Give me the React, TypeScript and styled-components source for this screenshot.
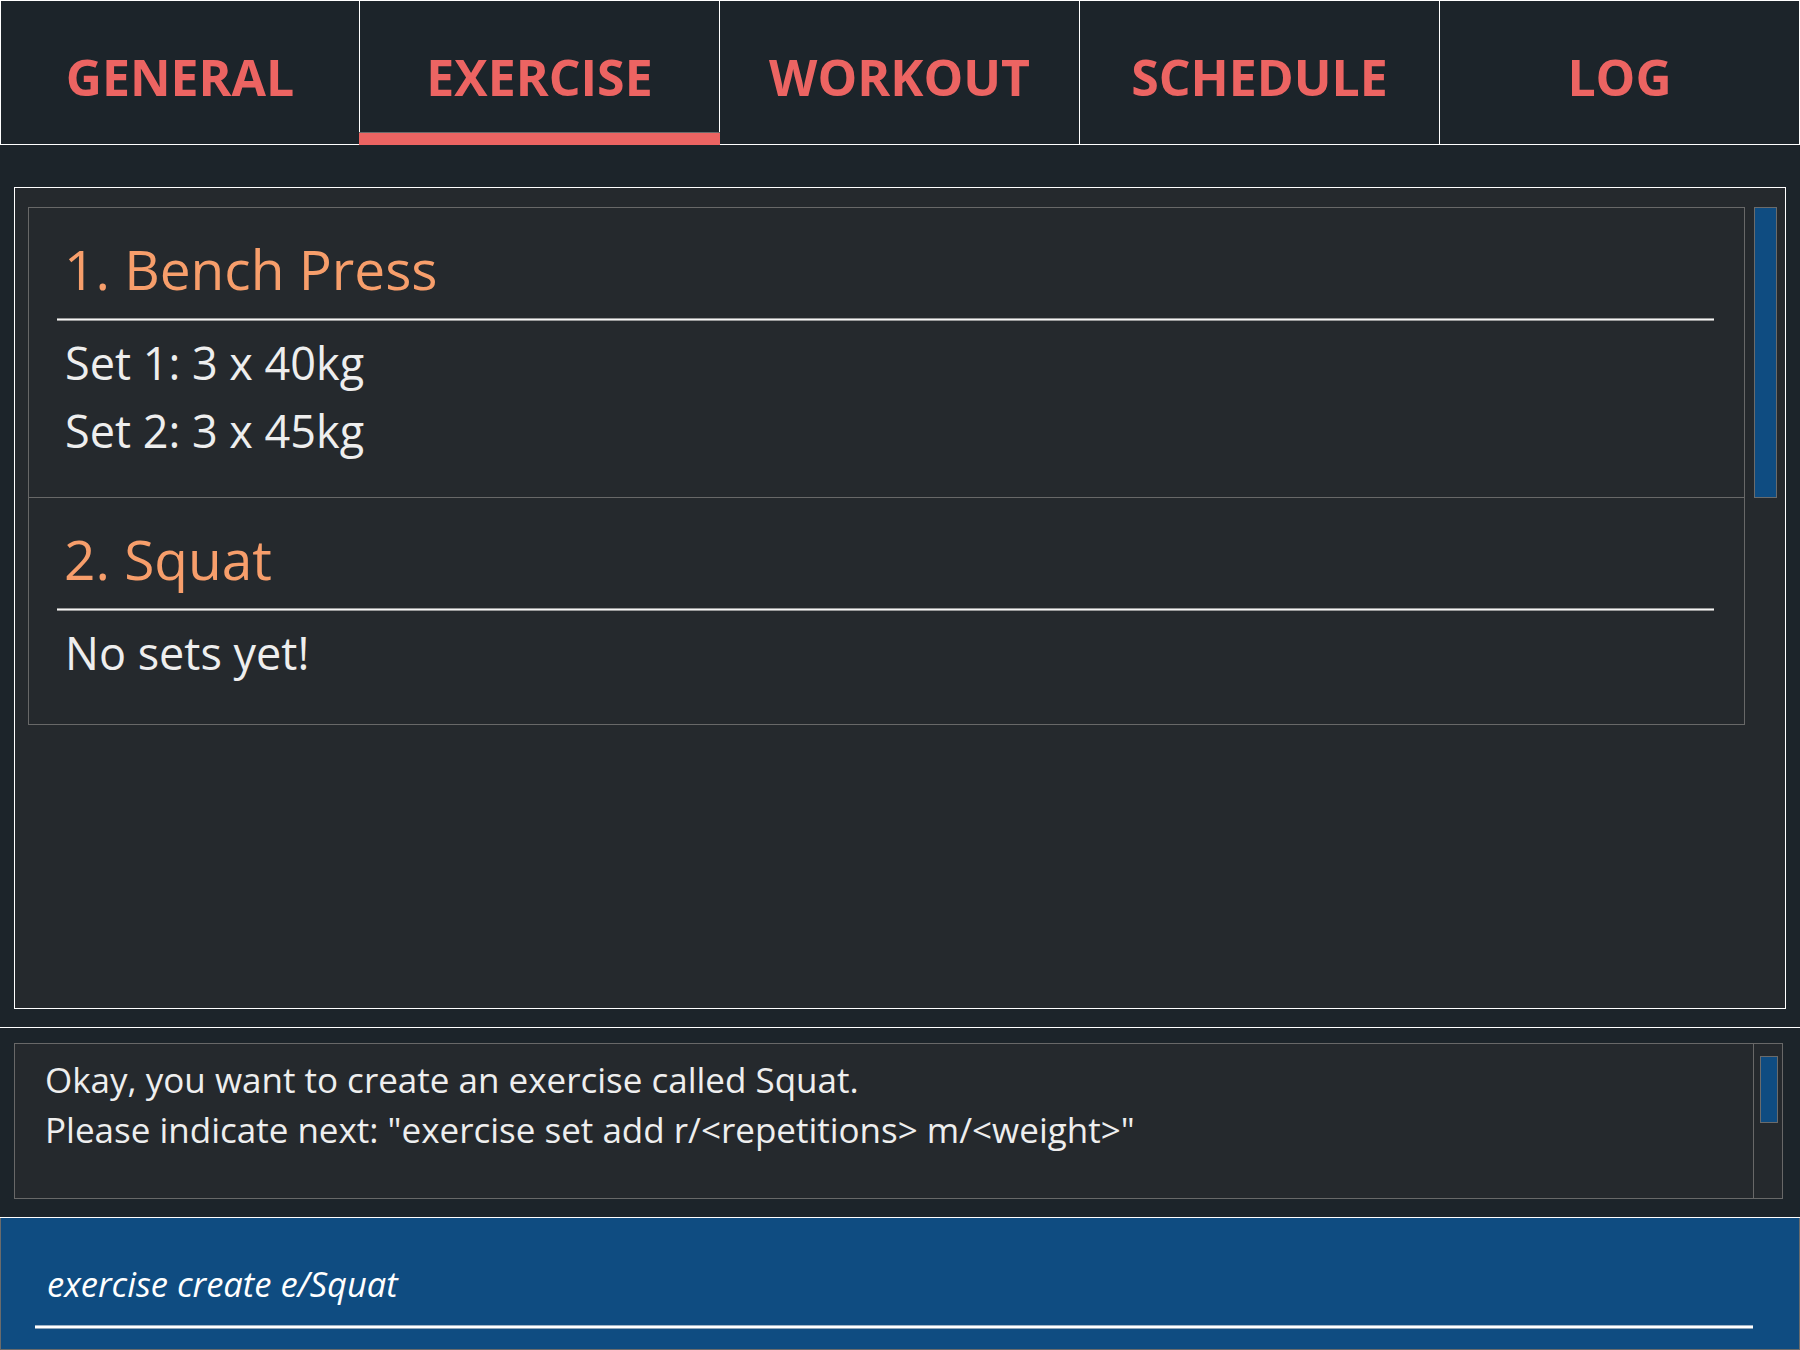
import React from 'react';
import styled, { createGlobalStyle } from 'styled-components';

interface ExerciseSet {
  reps: number;
  weight: number;
}
interface Exercise {
  name: string;
  sets: ExerciseSet[];
}

const tabs = ['General', 'Exercise', 'Workout', 'Schedule', 'Log'];
const activeTab = 'Exercise';

const exercises: Exercise[] = [
  {
    name: 'Bench Press',
    sets: [
      { reps: 3, weight: 40 },
      { reps: 3, weight: 45 },
    ],
  },
  { name: 'Squat', sets: [] },
];

const resultLines = [
  'Okay, you want to create an exercise called Squat.',
  'Please indicate next: "exercise set add r/<repetitions> m/<weight>"',
];

const GlobalStyle = createGlobalStyle`
  html, body {
    margin: 0;
    padding: 0;
    background: #1c242a;
  }
  body {
    font-family: 'Open Sans', 'Noto Sans', sans-serif;
  }
  * {
    box-sizing: border-box;
  }
`;

const App: React.FC = () => {
  return (
    <>
      <GlobalStyle />
      <Window>
        <TabBar>
          {tabs.map((t) => (
            <Tab key={t} active={t === activeTab}>
              {t}
            </Tab>
          ))}
        </TabBar>

        <ListPanel>
          <CardList>
            {exercises.map((ex, i) => (
              <Card key={ex.name}>
                <CardTitle>
                  {i + 1}. {ex.name}
                </CardTitle>
                <Separator />
                <SetList>
                  {ex.sets.length ? (
                    ex.sets.map((s, j) => (
                      <SetLine key={j}>
                        Set {j + 1}: {s.reps} x {s.weight}kg
                      </SetLine>
                    ))
                  ) : (
                    <EmptyNote>No sets yet!</EmptyNote>
                  )}
                </SetList>
              </Card>
            ))}
          </CardList>
          <ScrollTrack>
            <Thumb style={{ height: 291 }} />
          </ScrollTrack>
        </ListPanel>

        <ResultSection>
          <ResultBox>
            <ResultText>
              {resultLines.map((l) => (
                <div key={l}>{l}</div>
              ))}
            </ResultText>
            <ResultScroll>
              <SmallThumb />
            </ResultScroll>
          </ResultBox>
        </ResultSection>

        <CommandBox>
          <CommandInput readOnly defaultValue="exercise create e/Squat" />
          <CommandUnderline />
        </CommandBox>
      </Window>
    </>
  );
};
export default App;

const Window = styled.div`
  width: 1800px;
  height: 1350px;
  display: flex;
  flex-direction: column;
  background: #1c242a;
  overflow: hidden;
`;

const TabBar = styled.div`
  display: grid;
  grid-template-columns: repeat(5, 1fr);
  height: 145px;
  flex-shrink: 0;
`;

const Tab = styled.div<{ active?: boolean }>`
  position: relative;
  display: flex;
  align-items: center;
  justify-content: center;
  padding-top: 8px;
  border-top: 1px solid #ffffff;
  border-bottom: 1px solid #ffffff;
  border-right: 1px solid #ffffff;
  &:first-child {
    border-left: 1px solid #ffffff;
  }
  background: #1c242a;
  color: #ec6462;
  font-size: 50px;
  font-weight: 700;
  text-transform: uppercase;
  &::after {
    content: '';
    display: ${(p) => (p.active ? 'block' : 'none')};
    position: absolute;
    left: -1px;
    right: -1px;
    bottom: -1px;
    height: 12px;
    background: #ec6462;
    border-top: 1px solid #6b6b6b;
  }
`;

const ListPanel = styled.div`
  margin: 42px 14px 0 14px;
  height: 822px;
  flex-shrink: 0;
  border: 1px solid #ffffff;
  background: #25292d;
  padding: 19px 8px 0 13px;
  display: flex;
  gap: 9px;
`;

const CardList = styled.div`
  flex: 1;
  display: flex;
  flex-direction: column;
`;

const Card = styled.div`
  border: 1px solid #686868;
  padding: 23px 30px 32px 28px;
  background: #25292d;
  & + & {
    border-top: none;
  }
`;

const CardTitle = styled.div`
  font-size: 55px;
  line-height: 76px;
  color: #f79e6b;
  padding-left: 7px;
`;

const Separator = styled.div`
  margin-top: 11px;
  height: 3px;
  background: #f4f4f4;
  border-top: 1px solid #9a9a9a;
  border-bottom: 1px solid #9a9a9a;
`;

const SetList = styled.div`
  margin-top: 8px;
`;

const SetLine = styled.div`
  font-size: 45px;
  line-height: 68px;
  color: #eeeeee;
  padding-left: 8px;
`;

const EmptyNote = styled(SetLine)`
  margin-bottom: 5px;
`;

const ScrollTrack = styled.div`
  width: 23px;
  flex-shrink: 0;
`;

const Thumb = styled.div`
  width: 23px;
  background: #0f4c81;
  border: 1px solid #6b6b6b;
`;

const ResultSection = styled.div`
  margin-top: 18px;
  height: 191px;
  flex-shrink: 0;
  border-top: 1px solid #ffffff;
  border-bottom: 1px solid #ffffff;
  padding: 15px 17px 18px 14px;
`;

const ResultBox = styled.div`
  height: 100%;
  display: flex;
  border: 1px solid #686868;
  background: #25292d;
`;

const ResultText = styled.div`
  flex: 1;
  padding: 11px 0 0 30px;
  font-size: 35px;
  line-height: 50px;
  color: #eeeeee;
  white-space: pre;
`;

const ResultScroll = styled.div`
  width: 29px;
  border-left: 1px solid #686868;
  padding: 12px 0 0 6px;
`;

const SmallThumb = styled.div`
  width: 18px;
  height: 67px;
  background: #0f4c81;
  border: 1px solid #6b6b6b;
`;

const CommandBox = styled.div`
  flex: 1;
  background: #0f4c81;
  border: 1px solid #6b6b6b;
  border-top: none;
  padding: 44px 46px 0 34px;
`;

const CommandInput = styled.input`
  display: block;
  width: 100%;
  height: 44px;
  margin: 0 0 19px 0;
  padding: 0 0 0 12px;
  border: none;
  outline: none;
  background: transparent;
  color: #ffffff;
  font-family: 'Open Sans', 'Noto Sans', sans-serif;
  font-style: italic;
  font-size: 34.5px;
  line-height: 44px;
`;

const CommandUnderline = styled.div`
  height: 4px;
  background: #ffffff;
  border-top: 1px solid #9fb4c8;
  border-bottom: 1px solid #8ea4ba;
`;
